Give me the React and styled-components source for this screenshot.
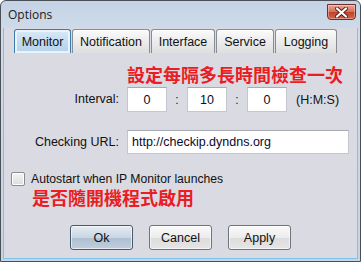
import React, { useState } from "react";
import styled, { createGlobalStyle } from "styled-components";

const GlobalStyle = createGlobalStyle`
  html, body {
    margin: 0;
    padding: 0;
    background: #ffffff;
  }
  body {
    font-family: "Liberation Sans", Arial, sans-serif;
    font-size: 12px;
  }
`;

const TABS = ["Monitor", "Notification", "Interface", "Service", "Logging"];
const TAB_WIDTHS = [57, 78, 64, 58, 62];

function Options() {
  const [tab, setTab] = useState(0);
  const [autostart, setAutostart] = useState(false);

  return (
    <Window>
      <TitleBar>
        <Title>Options</Title>
        <CloseButton aria-label="Close">
          <svg width="13" height="11" viewBox="0 0 13 11">
            <path
              d="M2 1.5 L11 9.5 M11 1.5 L2 9.5"
              stroke="#5a2018"
              strokeWidth="4"
              strokeLinecap="round"
            />
            <path
              d="M2 1.5 L11 9.5 M11 1.5 L2 9.5"
              stroke="#ffffff"
              strokeWidth="2.2"
              strokeLinecap="round"
            />
          </svg>
        </CloseButton>
      </TitleBar>

      <Body>
        <TabRow>
          {TABS.map((name, i) => (
            <Tab
              key={name}
              $active={i === tab}
              $width={TAB_WIDTHS[i]}
              onClick={() => setTab(i)}
            >
              {name}
            </Tab>
          ))}
        </TabRow>

        <Form>
          <span />
          <Hint>設定每隔多長時間檢查一次</Hint>

          <Label>Interval:</Label>
          <IntervalFields>
            <SmallInput defaultValue="0" />
            <Colon>:</Colon>
            <SmallInput defaultValue="10" />
            <Colon>:</Colon>
            <SmallInput defaultValue="0" />
            <Unit>(H:M:S)</Unit>
          </IntervalFields>

          <Label $top={18}>Checking URL:</Label>
          <UrlInput defaultValue="http://checkip.dyndns.org" />
        </Form>

        <CheckRow onClick={() => setAutostart(!autostart)}>
          <CheckBox $checked={autostart}>{autostart ? "✓" : ""}</CheckBox>
          <span>Autostart when IP Monitor launches</span>
        </CheckRow>
        <Hint $indent={28}>是否隨開機程式啟用</Hint>

        <ButtonRow>
          <Button $primary>Ok</Button>
          <Button>Cancel</Button>
          <Button>Apply</Button>
        </ButtonRow>
      </Body>
    </Window>
  );
}

const Window = styled.div`
  width: 361px;
  height: 262px;
  box-sizing: border-box;
  border: 1px solid #4b5058;
  border-radius: 6px 6px 0 0;
  background: linear-gradient(#c4d3e5, #cfdbe9 30px, #c6d4e4);
  display: flex;
  flex-direction: column;
  overflow: hidden;
`;

const TitleBar = styled.div`
  height: 27px;
  display: flex;
  align-items: flex-start;
  justify-content: space-between;
  padding: 0 4px 0 7px;
`;

const Title = styled.div`
  font-family: "Open Sans", "Noto Sans", sans-serif;
  font-size: 12px;
  color: #1b1b1b;
  margin-top: 5px;
`;

const CloseButton = styled.div`
  width: 29px;
  height: 16px;
  margin-top: 3px;
  box-sizing: border-box;
  border: 1px solid #6e2d25;
  border-radius: 0 0 4px 4px;
  background: linear-gradient(#e9a696, #d46c56 50%, #c2412a 51%, #d0654b);
  box-shadow: inset 0 0 0 1px rgba(255, 255, 255, 0.35);
  display: flex;
  align-items: center;
  justify-content: center;
`;

const Body = styled.div`
  flex: 1;
  margin: 0 2px 2px 2px;
  background: #d9dae2;
  border: 1px solid #7cc3e6;
  border-top: none;
  display: flex;
  flex-direction: column;
`;

const TabRow = styled.div`
  display: flex;
  align-items: flex-end;
  gap: 1px;
  margin: 1px 0 0 10px;
  height: 24px;
`;

const Tab = styled.div`
  width: ${(p) => p.$width}px;
  height: 24px;
  box-sizing: border-box;
  border: 1px solid ${(p) => (p.$active ? "#3d7bad" : "#898c95")};
  border-bottom: none;
  border-radius: 3px 3px 0 0;
  background: ${(p) =>
    p.$active
      ? "linear-gradient(#d9eaf7, #c3dcf0 50%, #b4d1ea)"
      : "linear-gradient(#fbfbfb, #ececec 50%, #dedede)"};
  box-shadow: ${(p) =>
    p.$active ? "inset 0 0 0 2px #eaf3fb" : "inset 0 1px 0 #ffffff"};
  display: flex;
  align-items: center;
  justify-content: center;
  font-size: 12.5px;
  color: #111;
  cursor: default;
`;

const Form = styled.div`
  display: grid;
  grid-template-columns: 115px 222px;
  column-gap: 8px;
  align-items: center;
  margin-top: 10px;
`;

const Hint = styled.div`
  font-family: "Noto Sans CJK TC", "Noto Sans CJK SC", sans-serif;
  font-weight: 700;
  font-size: 18px;
  line-height: 22px;
  color: #ea1c24;
  white-space: nowrap;
  margin-left: ${(p) => p.$indent || 0}px;
`;

const Label = styled.div`
  text-align: right;
  margin-top: ${(p) => p.$top || 0}px;
  color: #111;
  font-size: 12.5px;
`;

const IntervalFields = styled.div`
  display: flex;
  align-items: center;
  margin-top: 2px;
`;

const fieldCss = `
  box-sizing: border-box;
  height: 25px;
  border: 1px solid #c3c6cc;
  border-top-color: #a8abb2;
  background: #ffffff;
  font-family: "Liberation Sans", Arial, sans-serif;
  font-size: 12.5px;
  color: #0a0a2a;
  outline: none;
  margin: 0;
`;

const SmallInput = styled.input`
  ${fieldCss}
  width: 40px;
  text-align: center;
  padding: 0;
`;

const Colon = styled.span`
  width: 20px;
  text-align: center;
  color: #222;
`;

const Unit = styled.span`
  margin-left: 9px;
  font-size: 12.5px;
  color: #111;
`;

const UrlInput = styled.input`
  ${fieldCss}
  height: 24px;
  width: 222px;
  margin-top: 18px;
  padding: 0 4px;
`;

const CheckRow = styled.label`
  display: flex;
  align-items: center;
  gap: 6px;
  margin: 17px 0 0 7px;
  height: 15px;
  font-size: 12.2px;
  color: #111;
  cursor: default;
`;

const CheckBox = styled.span`
  width: 14px;
  height: 14px;
  box-sizing: border-box;
  border: 1px solid #8a8c90;
  border-radius: 2px;
  background: linear-gradient(#f4f4f4, #dcdde0);
  box-shadow: inset 0 0 0 1px #ffffff;
  font-size: 11px;
  line-height: 12px;
  text-align: center;
  color: #1c3f7a;
`;

const ButtonRow = styled.div`
  display: flex;
  justify-content: center;
  gap: 16px;
  margin-top: 17px;
`;

const Button = styled.button`
  width: 63px;
  height: 25px;
  box-sizing: border-box;
  border: 1px solid ${(p) => (p.$primary ? "#4a5a6e" : "#70737a")};
  border-radius: 3px;
  background: ${(p) =>
    p.$primary
      ? "linear-gradient(#e4ecf4, #c9d6e3 50%, #aebfd1 51%, #c0cedd)"
      : "linear-gradient(#fafafa, #ececec 50%, #dcdcdc 51%, #e6e6e6)"};
  box-shadow: inset 0 0 0 1px rgba(255, 255, 255, 0.6);
  font-family: "Liberation Sans", Arial, sans-serif;
  font-size: 12.5px;
  color: #111;
  padding: 0;
`;

export default function App() {
  return (
    <>
      <GlobalStyle />
      <Options />
    </>
  );
}
